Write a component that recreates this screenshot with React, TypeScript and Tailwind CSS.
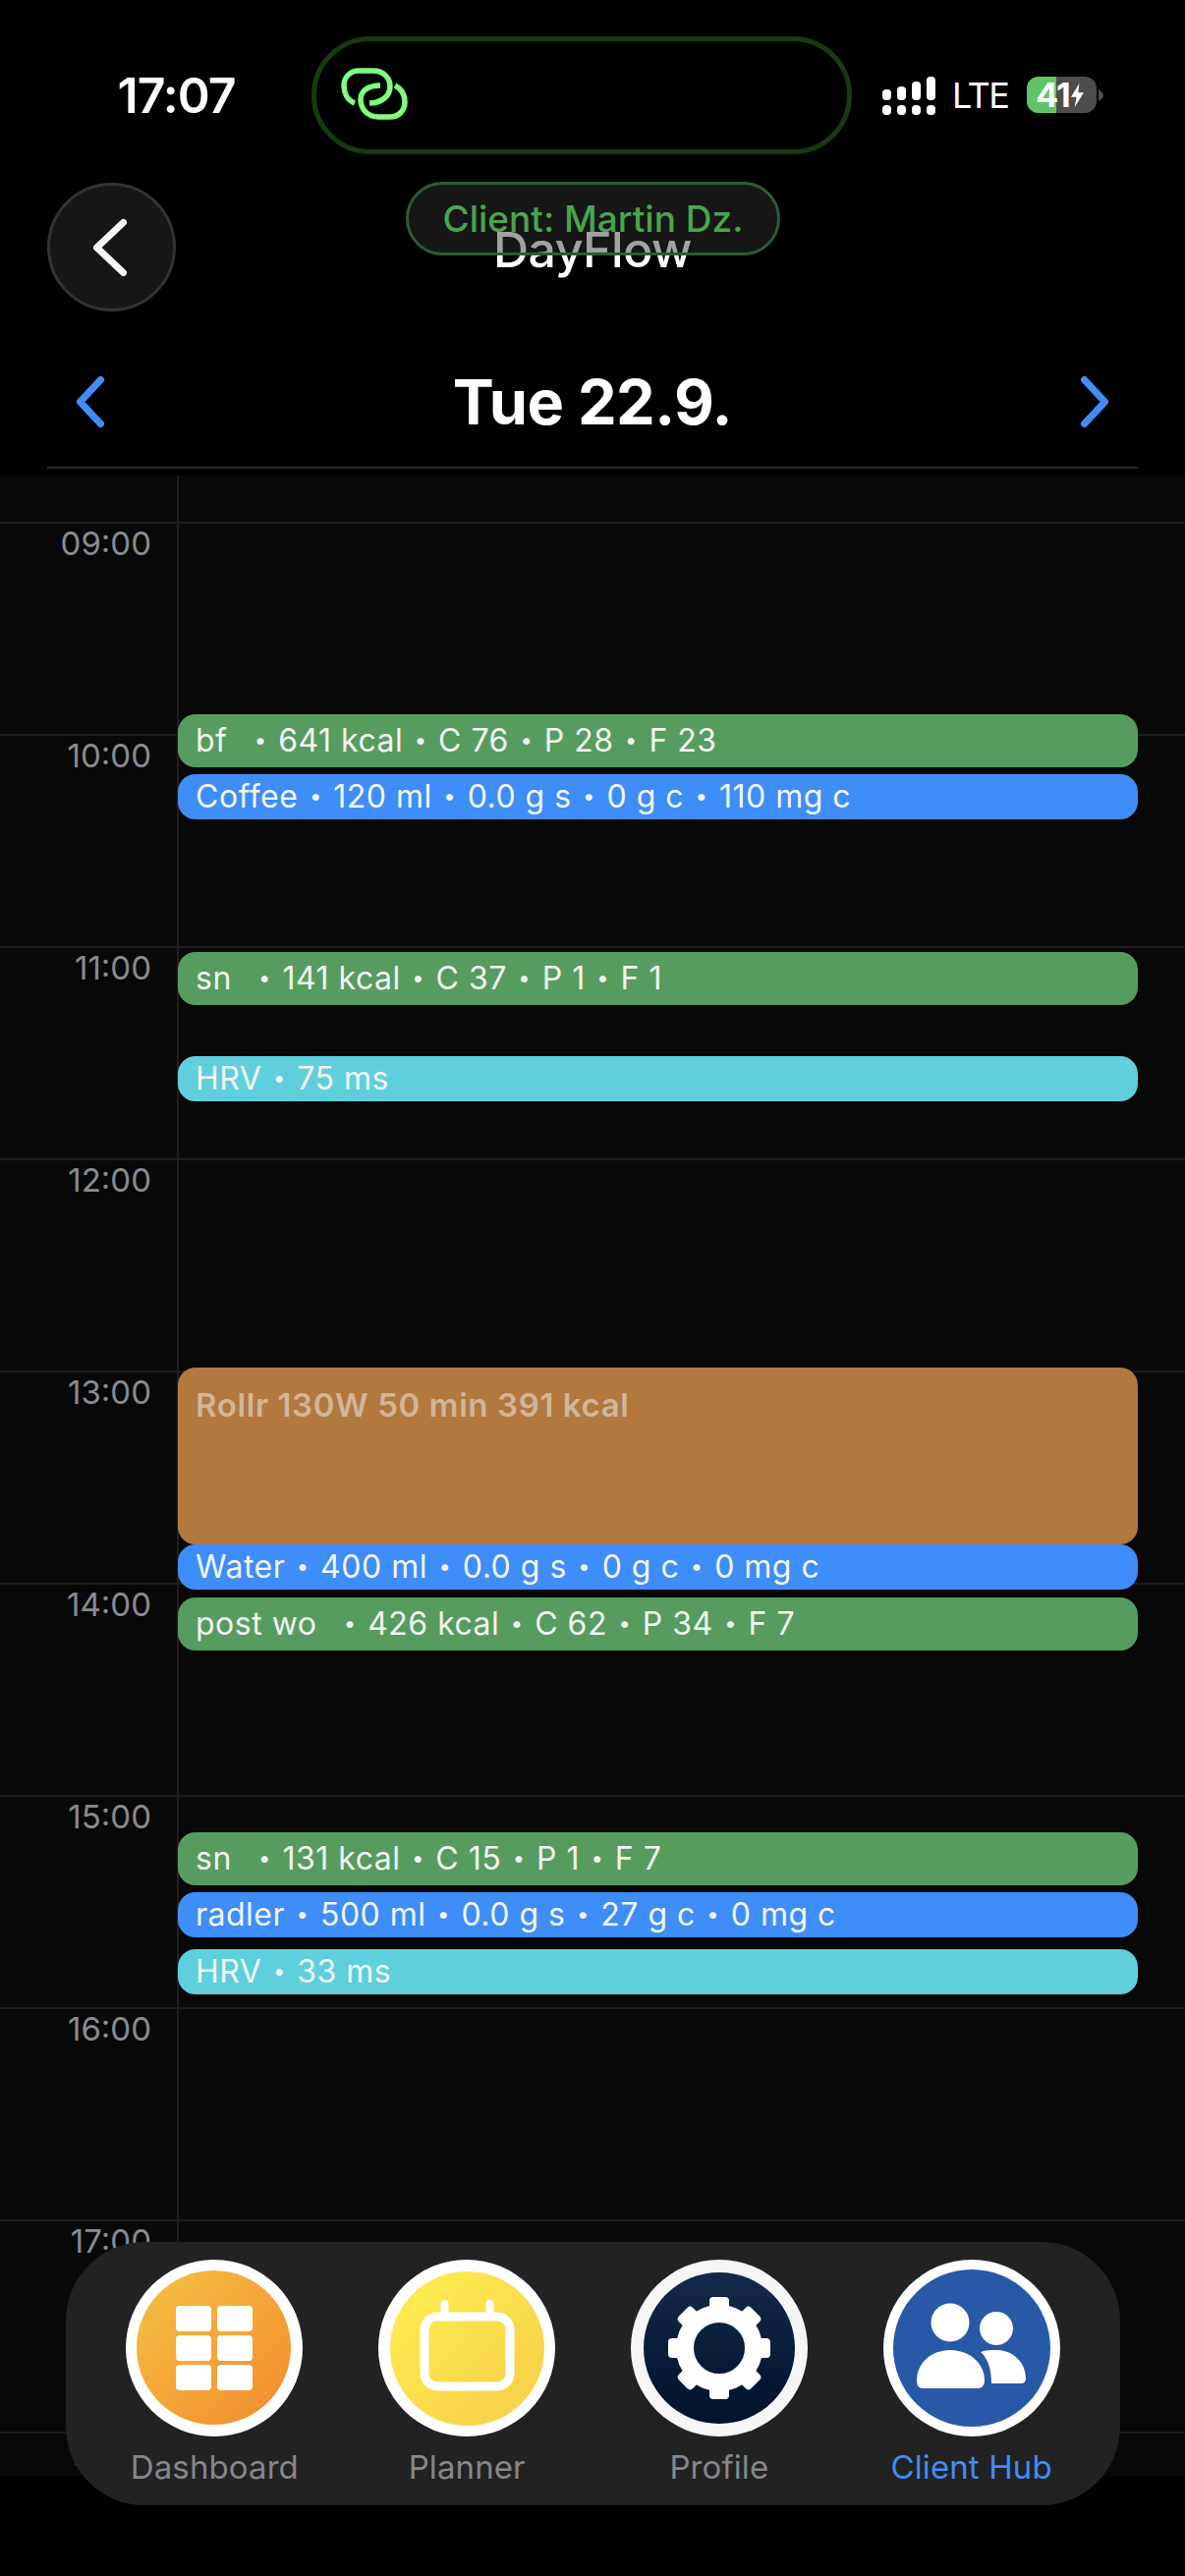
import React from "react";

const hours = ["09:00", "10:00", "11:00", "12:00", "13:00", "14:00", "15:00", "16:00", "17:00", "18:00"];

const GREEN = "bg-[#569c5e]";
const BLUE = "bg-[#3f8df8]";
const CYAN = "bg-[#60cfdd]";

const events = [
  { text: "bf  \u2009• 641 kcal • C 76 • P 28 • F 23", cls: `top-[243px] h-[54px] ${GREEN}` },
  { text: "Coffee • 120 ml • 0.0 g s • 0 g c • 110 mg c", cls: `top-[304px] h-[46px] ${BLUE}` },
  { text: "sn  \u2009• 141 kcal • C 37 • P 1 • F 1", cls: `top-[485px] h-[54px] ${GREEN}` },
  { text: "HRV • 75 ms", cls: `top-[591px] h-[46px] ${CYAN}` },
  { text: "Water • 400 ml • 0.0 g s • 0 g c • 0 mg c", cls: `top-[1088px] h-[46px] ${BLUE}` },
  { text: "post wo  \u2009• 426 kcal • C 62 • P 34 • F 7", cls: `top-[1142px] h-[54px] ${GREEN}` },
  { text: "sn  \u2009• 131 kcal • C 15 • P 1 • F 7", cls: `top-[1381px] h-[54px] ${GREEN}` },
  { text: "radler • 500 ml • 0.0 g s • 27 g c • 0 mg c", cls: `top-[1442px] h-[46px] ${BLUE}` },
  { text: "HRV • 33 ms", cls: `top-[1500px] h-[46px] ${CYAN}` },
];

function EventText({ text }: { text: string }) {
  const parts = text.split("•");
  return (
    <span className="whitespace-pre text-[32px] leading-[36px] tracking-[0.5px] text-[#f2f6f2]">
      {parts.map((p, i) => (
        <React.Fragment key={i}>
          {i > 0 && <span className="relative -top-[4px] mx-[2px] text-[22px]">•</span>}
          {p}
        </React.Fragment>
      ))}
    </span>
  );
}

function LinkIcon() {
  return (
    <svg width="70" height="55" viewBox="0 0 70 55" fill="none" stroke="#7dff7d" strokeWidth="5.5">
      <path d="M14 36 C6 33 3 25 3 18 C3 9 10 3 18 3 H33 C43 3 50 10 50 19 C50 29 41 36 29 36" />
      <path d="M40 18 C27 18 20 24 20 32 C20 43 28 50 38 50 H50 C59 50 65 43 65 35 C65 27 61 21 55 18" />
    </svg>
  );
}

function SignalIcon() {
  const cols = [
    [13, 11],
    [10, 14],
    [5, 19],
    [0, 24],
  ];
  return (
    <svg width="54" height="39" viewBox="0 0 54 39" fill="white">
      {cols.map(([y, h], i) => (
        <g key={i}>
          <rect x={i * 15} y={y} width="9" height={h} rx="4" />
          <rect x={i * 15} y="29" width="9" height="10" rx="4" />
        </g>
      ))}
    </svg>
  );
}

function Battery() {
  return (
    <div className="flex items-center">
      <div className="relative w-[71px] h-[37px] rounded-[12px] overflow-hidden bg-[#4d4d4d] flex items-center justify-start pl-[9px]">
        <div className="absolute left-0 top-0 bottom-0 w-[30px] bg-[#62c466]" />
        <span className="relative text-white font-bold text-[34px] leading-none tracking-[-1px]">41</span>
        <svg className="relative ml-[1px]" width="13" height="26" viewBox="0 0 14 26" fill="white">
          <path d="M9 0 L0 15 H6 L4 26 L14 10 H8 Z" />
        </svg>
      </div>
      <svg className="ml-[2px]" width="5" height="12" viewBox="0 0 5 12" fill="#4d4d4d">
        <path d="M0 0 C3 2 5 4 5 6 C5 8 3 10 0 12 Z" />
      </svg>
    </div>
  );
}

function Chevron({ dir, color, w, h, sw }: { dir: "l" | "r"; color: string; w: number; h: number; sw: number }) {
  const p = sw / 2 + 1;
  const d =
    dir === "l"
      ? `M${w - p} ${p} L${p} ${h / 2} L${w - p} ${h - p}`
      : `M${p} ${p} L${w - p} ${h / 2} L${p} ${h - p}`;
  return (
    <svg width={w} height={h} viewBox={`0 0 ${w} ${h}`} fill="none" stroke={color} strokeWidth={sw} strokeLinecap="round" strokeLinejoin="round">
      <path d={d} />
    </svg>
  );
}

function GridGlyph() {
  const xs = [40, 82];
  const ys = [36, 66, 96];
  return (
    <svg width="157" height="157" viewBox="0 0 157 157" fill="white">
      {ys.map((y) => xs.map((x) => <rect key={`${x}-${y}`} x={x} y={y} width="36" height="26" rx="4" />))}
    </svg>
  );
}

function CalendarGlyph() {
  return (
    <svg width="157" height="157" viewBox="0 0 157 157" fill="none" stroke="white">
      <rect x="35" y="46" width="87" height="71" rx="13" strokeWidth="9" />
      <path d="M55.5 42 V33 M101.5 42 V33" strokeWidth="8" strokeLinecap="round" />
    </svg>
  );
}

function GearGlyph() {
  const angles = [0, 45, 90, 135, 180, 225, 270, 315];
  return (
    <svg width="154" height="154" viewBox="0 0 154 154" fill="white">
      <circle cx="77" cy="77" r="35" fill="none" stroke="white" strokeWidth="18" />
      {angles.map((a) => (
        <rect key={a} x="67" y="25" width="20" height="20" rx="4" transform={`rotate(${a} 77 77)`} />
      ))}
    </svg>
  );
}

function PeopleGlyph() {
  return (
    <svg width="160" height="160" viewBox="0 0 160 160" fill="white">
      <circle cx="58" cy="54" r="19.5" />
      <circle cx="105" cy="60" r="17" />
      <path d="M24 113 C24 96 38 82 58 82 C78 82 93 96 93 113 C93 118 90 121 86 121 H30 C26 121 24 118 24 113 Z" />
      <path d="M89 84 C94 82 100 82 105 82 C122 82 135 95 135 111 C135 114 133 116 130 116 H100 C100 103 97 91 89 84 Z" />
    </svg>
  );
}

const tabs = [
  { label: "Dashboard", inner: "bg-gradient-to-br from-[#f4c142] to-[#f18a2e] w-[157px] h-[157px] -translate-x-[1px] -translate-y-[1px]", glyph: <GridGlyph />, ring: "bg-[#ffffff]", text: "text-[#86868b]" },
  { label: "Planner", inner: "bg-gradient-to-br from-[#fdf050] to-[#f7cc48] w-[157px] h-[157px]", glyph: <CalendarGlyph />, ring: "bg-[#ffffff]", text: "text-[#86868b]" },
  { label: "Profile", inner: "bg-gradient-to-b from-[#14294a] to-[#02122a] w-[154px] h-[154px]", glyph: <GearGlyph />, ring: "bg-[#f6f6f6]", text: "text-[#86868b]" },
  { label: "Client Hub", inner: "bg-[#2859a7] w-[160px] h-[160px]", glyph: <PeopleGlyph />, ring: "bg-[#ffffff]", text: "text-[#3f8df8]" },
];

export default function App() {
  return (
    <div className="relative w-[1206px] h-[2622px] bg-black overflow-hidden font-['Inter','Liberation_Sans',sans-serif] text-white">
      {/* status bar */}
      <div className="h-[186px] flex items-start">
        <div className="w-[317px] h-[194px] flex justify-center pt-[72px] pl-[42px]">
          <span className="text-[50px] leading-[50px] font-semibold tracking-[-1px]">17:07</span>
        </div>
        <div className="mt-[37px] w-[550px] h-[120px] rounded-[60px] border-[5px] border-[#173a0e] flex items-center pl-[25px] pb-[2px]">
          <LinkIcon />
        </div>
        <div className="ml-[31px] mt-[78px] flex items-start">
          <SignalIcon />
          <span className="ml-[17px] -mt-[1px] text-[36px] leading-[40px] font-normal tracking-[-1.5px]">LTE</span>
          <div className="ml-[19px]">
            <Battery />
          </div>
        </div>
      </div>

      {/* title row */}
      <div className="relative h-[131px] px-[48px] flex items-center">
        <div className="w-[131px] h-[131px] rounded-full bg-[#161616] border-[3px] border-[#333333] flex items-center justify-center pr-[4px]">
          <Chevron dir="l" color="#f5f5f5" w={36} h={60} sw={7} />
        </div>
        <div className="absolute left-0 right-0 top-[40px] text-center text-[50px] leading-[56px] font-medium tracking-[-0.5px] text-white">DayFlow</div>
        <div className="absolute left-[413px] top-[-1px] w-[381px] h-[75px] rounded-[38px] border-[3px] border-[#2f5a33] bg-[rgba(48,48,48,0.45)] flex items-center justify-center">
          <span className="text-[37px] leading-[40px] font-medium text-[#4aa54e]">Client: Martin Dz.</span>
        </div>
      </div>

      {/* date row */}
      <div className="mx-[48px] mt-[66px] h-[94px] pl-[29px] pr-[29px] pb-[41px] border-b-2 border-[#2a2a2a] flex items-center justify-between">
        <Chevron dir="l" color="#3f8df8" w={30} h={54} sw={7} />
        <span className="text-[63px] leading-[70px] font-bold tracking-[-0.5px]">Tue 22.9.</span>
        <Chevron dir="r" color="#3f8df8" w={30} h={54} sw={7} />
      </div>

      {/* calendar */}
      <div className="relative mt-[7px] h-[2036px] bg-[#080808] overflow-hidden">
        <div className="flex flex-col">
          <div className="h-[47px] flex">
            <div className="w-[182px] border-r-2 border-[#1f1f1f]" />
          </div>
          {hours.map((h) => (
            <div key={h} className="h-[216px] shrink-0 border-t-2 border-[#1c1c1c] flex">
              <div className="w-[182px] border-r-2 border-[#1f1f1f] pr-[26px] text-right">
                <span className="text-[33px] leading-[40px] text-[#8a8a8e]">{h}</span>
              </div>
            </div>
          ))}
        </div>

        {/* timed entries on the day canvas */}
        {events.map((e) => (
          <div key={e.text} className={`absolute left-[181px] w-[977px] rounded-[18px] pl-[18px] pt-[2px] flex items-center ${e.cls}`}>
            <EventText text={e.text} />
          </div>
        ))}
        <div className="absolute left-[181px] top-[908px] w-[977px] h-[180px] rounded-[18px] bg-[#b2783e] pl-[18px] pt-[20px]">
          <span className="text-[33px] leading-[36px] tracking-[0.6px] font-semibold text-[#d2b699]">Rollr 130W 50 min 391 kcal</span>
        </div>
      </div>

      {/* tab bar */}
      <div className="absolute left-[67px] top-[2282px] w-[1073px] h-[268px] rounded-[80px] bg-[#222222] px-[23px] pt-[18px] grid grid-cols-4">
        {tabs.map((t) => (
          <div key={t.label} className="flex flex-col items-center">
            <div className={`w-[180px] h-[180px] rounded-full flex items-center justify-center ${t.ring}`}>
              <div className={`rounded-full flex items-center justify-center ${t.inner}`}>{t.glyph}</div>
            </div>
            <span className={`mt-[11px] text-[33px] leading-[40px] tracking-[0.1px] ${t.text}`}>{t.label}</span>
          </div>
        ))}
      </div>
    </div>
  );
}
